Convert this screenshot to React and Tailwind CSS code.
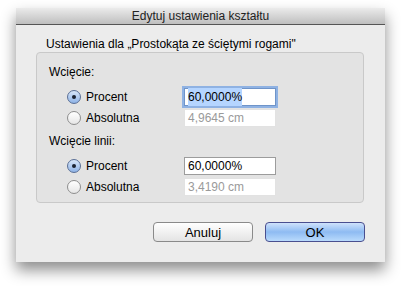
import React from 'react';

const Radio = ({ checked }) => (
  <span
    className={`w-[14px] h-[14px] rounded-full border flex items-center justify-center shrink-0 ${
      checked
        ? 'border-[#5a6f96] bg-gradient-to-b from-[#d8e6f8] to-[#8fb3e6]'
        : 'border-[#8e8e8e] bg-gradient-to-b from-[#ffffff] to-[#e6e6e6]'
    }`}
  >
    {checked && <span className="w-[4px] h-[4px] rounded-full bg-[#1b2230]" />}
  </span>
);

const Row = ({ label, checked, value, focused, disabled }) => (
  <div className="h-[21px] flex items-center">
    <div className="w-[30px]" />
    <Radio checked={checked} />
    <span className="ml-[5px] w-[98px]">{label}</span>
    <div
      className={`w-[92px] h-[18px] flex items-center px-[3px] bg-white ${
        focused
          ? 'border border-[#6f94c9] shadow-[0_0_0_2px_#8fb2e3]'
          : disabled
          ? 'border border-[#e2e2e2] text-[#9a9a9a]'
          : 'border border-[#9c9c9c]'
      }`}
    >
      <span className={focused ? 'bg-[#b5d5ff]' : ''}>{value}</span>
    </div>
  </div>
);

const App = () => {
  return (
    <div
      className="w-[401px] h-[286px] bg-white pt-[8px] pl-[16px] text-[12px] text-black"
      style={{ fontFamily: '"Liberation Sans", Arial, sans-serif' }}
    >
      <div className="w-[369px] h-[254px] bg-[#ececec] flex flex-col shadow-[0_8px_14px_rgba(0,0,0,0.45)]">
        {/* Title bar */}
        <div className="h-[17px] shrink-0 bg-gradient-to-b from-[#ebebeb] to-[#bfbfbf] border-b border-[#555] flex items-center justify-center text-[#222] leading-none">
          Edytuj ustawienia kształtu
        </div>

        <div className="pt-[11px] pl-[20px] pr-[21px] flex flex-col">
          <div className="h-[16px] leading-[16px] pl-[10px]">
            Ustawienia dla „Prostokąta ze ściętymi rogami"
          </div>

          {/* Group box */}
          <div className="h-[151px] bg-[#e3e3e3] border border-[#c9c9c9] rounded-[4px] pt-[11px] flex flex-col">
            <div className="h-[16px] leading-[16px] pl-[12px]">Wcięcie:</div>
            <div className="mt-[6px]">
              <Row label="Procent" checked value="60,0000%" focused />
              <Row label="Absolutna" value="4,9645 cm" disabled />
            </div>
            <div className="h-[16px] leading-[16px] pl-[12px] mt-[5px]">Wcięcie linii:</div>
            <div className="mt-[6px]">
              <Row label="Procent" checked value="60,0000%" />
              <Row label="Absolutna" value="3,4190 cm" disabled />
            </div>
          </div>

          {/* Buttons */}
          <div className="mt-[19px] flex justify-end gap-[12px]">
            <button className="w-[100px] h-[20px] rounded-[4px] border border-[#8a8a8a] bg-gradient-to-b from-[#ffffff] to-[#e4e4e4] text-[13px] leading-none">
              Anuluj
            </button>
            <button className="w-[100px] h-[20px] rounded-[4px] border border-[#4a4f8f] bg-gradient-to-b from-[#cfe2fb] via-[#8ebbf2] to-[#b9dafc] text-[13px] leading-none -mr-[1px]">
              OK
            </button>
          </div>
        </div>
      </div>
    </div>
  );
};

export default App;
